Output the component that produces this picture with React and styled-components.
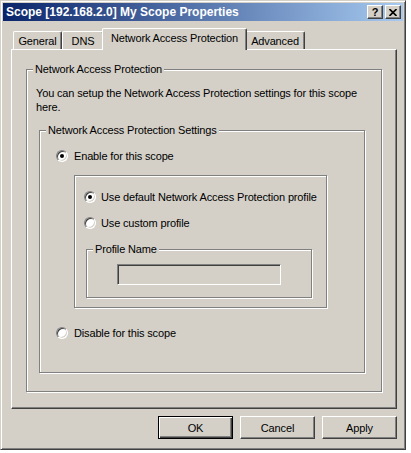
import React from 'react';
import styled, { createGlobalStyle } from 'styled-components';

const GlobalStyle = createGlobalStyle`
  body {
    margin: 0;
    background: #fff;
    font-family: "Liberation Sans", Arial, sans-serif;
    font-size: 11px;
    letter-spacing: -0.15px;
    color: #000;
  }
`;

// window frame
const Window = styled.div`
  box-sizing: border-box;
  width: 406px;
  height: 450px;
  padding: 2px;
  background: #d4d0c8;
  border: 1px solid;
  border-color: #d4d0c8 #404040 #404040 #d4d0c8;
  box-shadow: inset 1px 1px 0 #fff, inset -1px -1px 0 #808080;
  display: flex;
  flex-direction: column;
`;

const TitleBar = styled.div`
  height: 18px;
  display: flex;
  align-items: center;
  padding: 0 2px 0 3px;
  background: linear-gradient(to right, #0a246a, #a6caf0);
`;

const Title = styled.span`
  color: #fff;
  font-weight: bold;
  font-size: 12px;
  letter-spacing: 0;
  white-space: nowrap;
`;

const CaptionButtons = styled.div`
  margin-left: auto;
  display: flex;
  gap: 2px;
`;

const CaptionButton = styled.div`
  box-sizing: border-box;
  width: 16px;
  height: 14px;
  background: #d4d0c8;
  border: 1px solid;
  border-color: #fff #404040 #404040 #fff;
  box-shadow: inset -1px -1px 0 #808080;
  display: flex;
  align-items: center;
  justify-content: center;
  font-weight: bold;
  font-size: 11px;
  line-height: 1;
`;

// tabs
const TabRow = styled.div`
  position: relative;
  z-index: 1;
  display: flex;
  align-items: flex-end;
  height: 21px;
  margin: 7px 0 0 8px;
  padding-left: 2px;
`;

const Tab = styled.div`
  position: relative;
  z-index: ${p => (p.$active ? 2 : 1)};
  box-sizing: border-box;
  width: ${p => p.$w}px;
  height: ${p => (p.$active ? 22 : 18)}px;
  margin: 0 ${p => (p.$active ? -2 : 0)}px ${p => (p.$active ? -1 : 0)}px;
  padding-bottom: ${p => (p.$active ? 3 : 0)}px;
  background: #d4d0c8;
  border-top: 1px solid #fff;
  border-left: 1px solid #fff;
  border-right: 1px solid #404040;
  border-radius: 2px 2px 0 0;
  box-shadow: inset -1px 0 0 #808080;
  display: flex;
  align-items: center;
  justify-content: center;
  white-space: nowrap;
`;

const TabPanel = styled.div`
  box-sizing: border-box;
  width: 386px;
  height: 360px;
  margin-left: 8px;
  padding: 19px 14px 16px;
  border: 1px solid;
  border-color: #fff #404040 #404040 #fff;
  box-shadow: inset -1px -1px 0 #808080;
  display: flex;
  flex-direction: column;
`;

// etched group boxes
const GroupBox = styled.div`
  position: relative;
  box-sizing: border-box;
  border: 1px solid #808080;
  box-shadow: inset 1px 1px 0 #fff, 1px 1px 0 #fff;
`;

const Legend = styled.span`
  position: absolute;
  top: -7px;
  left: 6px;
  padding: 0 2px;
  line-height: 13px;
  background: #d4d0c8;
  white-space: nowrap;
`;

const OuterGroup = styled(GroupBox)`
  flex: 1;
  display: flex;
  flex-direction: column;
  padding: 16px 16px 18px 9px;
`;

const Description = styled.p`
  margin: 0;
  line-height: 14px;
`;

const SettingsGroup = styled(GroupBox)`
  flex: 1;
  margin: 16px 0 0 3px;
  padding: 18px 0 0 16px;
  display: flex;
  flex-direction: column;
  align-items: flex-start;
`;

const ProfileChoice = styled(GroupBox)`
  width: 253px;
  height: 133px;
  margin: 12px 0 0 18px;
  padding: 14px 0 0 9px;
  display: flex;
  flex-direction: column;
  align-items: flex-start;
`;

const ProfileNameGroup = styled(GroupBox)`
  width: 226px;
  height: 49px;
  margin: 19px 0 0 2px;
  padding: 14px 0 0 30px;
`;

const TextField = styled.div`
  box-sizing: border-box;
  width: 164px;
  height: 21px;
  background: #d4d0c8;
  border: 1px solid;
  border-color: #808080 #fff #fff #808080;
  box-shadow: inset 1px 1px 0 #404040, inset -1px -1px 0 #d4d0c8;
`;

// radio buttons
const RadioRow = styled.label`
  display: flex;
  align-items: center;
  gap: ${p => p.$gap || 6}px;
  height: 14px;
  margin-top: ${p => p.$top || 0}px;
  white-space: nowrap;
`;

const RadioCircle = styled.span`
  box-sizing: border-box;
  width: 12px;
  height: 12px;
  border-radius: 50%;
  border: 1px solid;
  border-color: #808080 #fff #fff #808080;
  box-shadow: inset 1px 1px 0 #404040, inset -1px -1px 0 #d4d0c8;
  background: #fff;
  display: flex;
  align-items: center;
  justify-content: center;
`;

const RadioDot = styled.span`
  width: 4px;
  height: 4px;
  border-radius: 50%;
  background: #000;
`;

const Radio = ({ checked, children, top, gap }) => (
  <RadioRow $top={top} $gap={gap}>
    <RadioCircle>{checked && <RadioDot />}</RadioCircle>
    <span>{children}</span>
  </RadioRow>
);

// dialog buttons
const ButtonRow = styled.div`
  width: 386px;
  margin: 7px 0 0 8px;
  display: flex;
  justify-content: flex-end;
  gap: 7px;
`;

const Button = styled.div`
  box-sizing: border-box;
  width: 75px;
  height: 23px;
  border: 1px solid;
  border-color: ${p => (p.$default ? '#000' : '#fff #404040 #404040 #fff')};
  box-shadow: ${p =>
    p.$default
      ? 'inset 1px 1px 0 #fff, inset -1px -1px 0 #404040, inset -2px -2px 0 #808080'
      : 'inset -1px -1px 0 #808080'};
  display: flex;
  align-items: center;
  justify-content: center;
`;

export default function App() {
  return (
    <>
      <GlobalStyle />
      <Window>
        <TitleBar>
          <Title>Scope [192.168.2.0] My Scope Properties</Title>
          <CaptionButtons>
            <CaptionButton>?</CaptionButton>
            <CaptionButton>
              <svg width="8" height="7" viewBox="0 0 8 7">
                <path d="M0.5 0 L7.5 7 M7.5 0 L0.5 7" stroke="#000" strokeWidth="1.6" />
              </svg>
            </CaptionButton>
          </CaptionButtons>
        </TitleBar>

        <TabRow>
          <Tab $w={49}>General</Tab>
          <Tab $w={42}>DNS</Tab>
          <Tab $w={145} $active>Network Access Protection</Tab>
          <Tab $w={60}>Advanced</Tab>
        </TabRow>

        <TabPanel>
          <OuterGroup>
            <Legend>Network Access Protection</Legend>
            <Description>
              You can setup the Network Access Protection settings for this scope
              <br />
              here.
            </Description>
            <SettingsGroup>
              <Legend>Network Access Protection Settings</Legend>
              <Radio checked>Enable for this scope</Radio>
              <ProfileChoice>
                <Radio checked gap={5}>Use default Network Access Protection profile</Radio>
                <Radio top={12} gap={5}>Use custom profile</Radio>
                <ProfileNameGroup>
                  <Legend>Profile Name</Legend>
                  <TextField />
                </ProfileNameGroup>
              </ProfileChoice>
              <Radio top={18}>Disable for this scope</Radio>
            </SettingsGroup>
          </OuterGroup>
        </TabPanel>

        <ButtonRow>
          <Button $default>OK</Button>
          <Button>Cancel</Button>
          <Button>Apply</Button>
        </ButtonRow>
      </Window>
    </>
  );
}
